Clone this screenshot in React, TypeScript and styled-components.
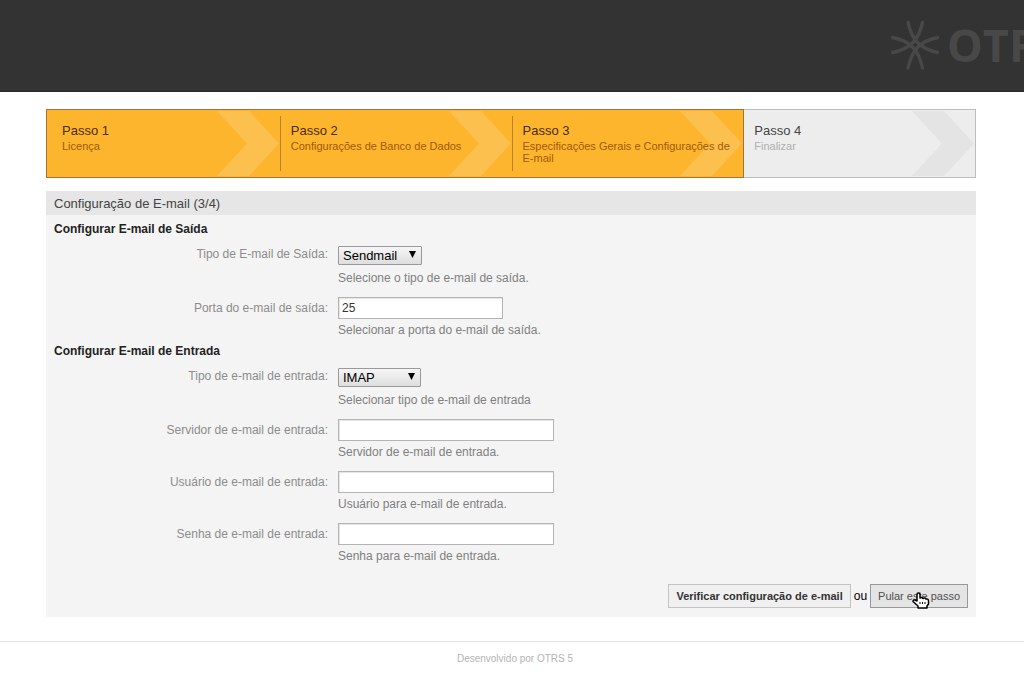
import React from 'react';
import styled, { createGlobalStyle, css } from 'styled-components';

const Global = createGlobalStyle`
  *, *::before, *::after { box-sizing: border-box; }
  body {
    margin: 0;
    background: #fff;
    color: #000;
    font: 12px/16px "Liberation Sans", Arial, sans-serif;
  }
`;

const Header = styled.header`
  display: flex;
  justify-content: flex-end;
  height: 92px;
  background: #333;
  border-bottom: 1px solid #2a2a2a;
  overflow: hidden;
`;

const Logo = styled.div`
  display: flex;
  align-items: center;
  gap: 7px;
  width: 134px;
  height: 90px;
  color: #484848;
  overflow: hidden;
  svg { flex: none; }
`;

const LogoName = styled.span`
  font: bold 45px/48px "Open Sans", "Noto Sans", sans-serif;
`;

const Main = styled.main`
  margin: 17px 48px 0 46px;
`;

const Steps = styled.ol`
  display: grid;
  grid-template-columns: repeat(4, 1fr);
  height: 69px;
  margin: 0 0 13px;
  padding: 0 0 0 1px;
  list-style: none;
  background: #ededed;
  border: 1px solid #bdbdbd;
`;

const StepItem = styled.li<{ $done: boolean; $first: boolean; $last: boolean }>`
  position: relative;
  margin: -1px 0;
  padding: 13px 10px 0 11px;
  border: solid transparent;
  border-width: 1px 0;
  color: #444;
  ${p => p.$done && css`
    background: #fdb52e;
    border-color: #a5703a;
    color: #4a2c00;
  `}
  ${p => p.$first && css`
    margin-left: -2px;
    padding-left: 15px;
    border-left-width: 1px;
  `}
  ${p => p.$last && css`
    margin-right: -1px;
    border-right-width: 1px;
  `}
  ${p => p.$done && !p.$first && css`
    &::before {
      content: '';
      position: absolute;
      left: 0;
      top: 6px;
      bottom: 6px;
      width: 1px;
      background: #b98230;
    }
  `}
`;

const StepArrow = styled.svg<{ $done: boolean }>`
  position: absolute;
  right: 1px;
  top: 1px;
  fill: ${p => (p.$done ? '#fcc04f' : '#e4e4e4')};
`;

const StepName = styled.div`
  position: relative;
  font-size: 13px;
  line-height: 16px;
`;

const StepText = styled.div<{ $done: boolean }>`
  position: relative;
  font-size: 11px;
  line-height: 12px;
  padding-top: 1px;
  color: ${p => (p.$done ? '#a05a0a' : '#b0b0b0')};
`;

const Panel = styled.section`
  background: #f4f4f4;
`;

const PanelTitle = styled.h1`
  margin: 0;
  padding: 5px 8px 3px;
  background: #e6e6e6;
  color: #444;
  font-size: 13px;
  font-weight: normal;
  line-height: 16px;
`;

const Form = styled.form`
  padding: 6px 8px 9px;
`;

const Group = styled.fieldset`
  min-width: 0;
  margin: 0;
  padding: 0 0 5px;
  border: 0;
`;

const GroupTitle = styled.legend`
  padding: 0;
  margin-bottom: 9px;
  color: #222;
  font-weight: bold;
`;

const Row = styled.div`
  display: grid;
  grid-template-columns: 274px 1fr;
  column-gap: 10px;
  & + & { margin-top: 11px; }
`;

const Label = styled.label<{ $text?: boolean }>`
  padding-top: ${p => (p.$text ? 3 : 0)}px;
  text-align: right;
  color: #8c8c8c;
`;

const Hint = styled.div<{ $text?: boolean }>`
  margin-top: ${p => (p.$text ? 3 : 5)}px;
  color: #808080;
`;

const SelectBox = styled.div`
  position: relative;
  display: flex;
  width: fit-content;
`;

const Select = styled.select<{ $width: number }>`
  appearance: none;
  width: ${p => p.$width}px;
  height: 19px;
  margin: 0;
  padding: 0 18px 0 4px;
  border: 1px solid #999;
  border-radius: 1px;
  background: linear-gradient(#f6f6f6, #dedede);
  color: #000;
  font: 13px/16px "Liberation Sans", Arial, sans-serif;
`;

const SelectArrow = styled.svg`
  position: absolute;
  right: 6px;
  top: 5px;
  pointer-events: none;
`;

const TextInput = styled.input<{ $width: number }>`
  display: block;
  width: ${p => p.$width}px;
  height: 22px;
  margin: 0;
  padding: 0 3px;
  border: 1px solid #b4b4b4;
  border-radius: 0;
  background: #fff;
  box-shadow: inset 1px 1px 1px #e4e4e4;
  color: #333;
  font: 12px/16px "Liberation Sans", Arial, sans-serif;
`;

const Actions = styled.div`
  display: flex;
  justify-content: flex-end;
  align-items: center;
  gap: 3px;
  margin-top: 15px;
`;

const Button = styled.button<{ $primary?: boolean }>`
  position: relative;
  height: 24px;
  padding: 0 7px;
  border: 1px solid ${p => (p.$primary ? '#c4c4c4' : '#999')};
  border-radius: 0;
  background: ${p => (p.$primary ? '#f0f0f0' : '#e4e4e4')};
  color: ${p => (p.$primary ? '#333' : '#505050')};
  font: ${p => (p.$primary ? 'bold' : 'normal')} 11px/14px "Liberation Sans", Arial, sans-serif;
`;

const Pointer = styled.svg`
  position: absolute;
  left: 41px;
  top: 7px;
`;

const Footer = styled.footer`
  margin-top: 24px;
  padding: 9px 0 8px 6px;
  border-top: 1px solid #e6e6e6;
  text-align: center;
  color: #b4b4b4;
  font-size: 10px;
`;

const steps = [
  { name: 'Passo 1', text: 'Licença', done: true },
  { name: 'Passo 2', text: 'Configurações de Banco de Dados', done: true },
  { name: 'Passo 3', text: 'Especificações Gerais e Configurações de E-mail', done: true },
  { name: 'Passo 4', text: 'Finalizar', done: false },
];

function SelectField({ id, label, options, width, hint }: {
  id: string; label: string; options: string[]; width: number; hint: string;
}) {
  return (
    <Row>
      <Label htmlFor={id}>{label}</Label>
      <div>
        <SelectBox>
          <Select id={id} $width={width} defaultValue={options[0]}>
            {options.map(o => <option key={o}>{o}</option>)}
          </Select>
          <SelectArrow width="7" height="7" viewBox="0 0 7 7" aria-hidden="true">
            <path d="M0 0H7L3.5 7Z" />
          </SelectArrow>
        </SelectBox>
        <Hint>{hint}</Hint>
      </div>
    </Row>
  );
}

function TextField({ id, label, type = 'text', value, width, hint }: {
  id: string; label: string; type?: string; value?: string; width: number; hint: string;
}) {
  return (
    <Row>
      <Label htmlFor={id} $text>{label}</Label>
      <div>
        <TextInput id={id} type={type} defaultValue={value} $width={width} />
        <Hint $text>{hint}</Hint>
      </div>
    </Row>
  );
}

export default function App() {
  return (
    <>
      <Global />
      <Header>
        <Logo>
          <svg width="50" height="50" viewBox="0 0 50 50" fill="none" stroke="currentColor" strokeWidth="3.4" strokeLinecap="round" aria-hidden="true">
            <path d="M18 2.5C20 11 23 18 27.500 22.500S40 31 47.500 32.500" />
            <path d="M32.500 2.500C30.500 11 27.500 18 23 22.500S10.500 31 2.500 32.500" />
            <path d="M18 48C20 39 23 32 27.500 27.500S40 19 47.500 17.500" />
            <path d="M32.500 48C30.500 39 27.500 32 23 27.500S10.500 19 2.500 17.500" />
          </svg>
          <LogoName>OTRS</LogoName>
        </Logo>
      </Header>
      <Main>
        <Steps>
          {steps.map((s, i) => (
            <StepItem key={s.name} $done={s.done} $first={i === 0} $last={s.done && !steps[i + 1]?.done}>
              <StepArrow $done={s.done} width="62" height="65" viewBox="0 0 62 65" aria-hidden="true">
                <path d="M0 0H32L62 32.5L32 65H0L30 32.5Z" />
              </StepArrow>
              <StepName>{s.name}</StepName>
              <StepText $done={s.done}>{s.text}</StepText>
            </StepItem>
          ))}
        </Steps>
        <Panel>
          <PanelTitle>Configuração de E-mail (3/4)</PanelTitle>
          <Form onSubmit={e => e.preventDefault()}>
            <Group>
              <GroupTitle>Configurar E-mail de Saída</GroupTitle>
              <SelectField id="out-type" label="Tipo de E-mail de Saída:" options={['Sendmail', 'SMTP']} width={84} hint="Selecione o tipo de e-mail de saída." />
              <TextField id="out-port" label="Porta do e-mail de saída:" value="25" width={165} hint="Selecionar a porta do e-mail de saída." />
            </Group>
            <Group>
              <GroupTitle>Configurar E-mail de Entrada</GroupTitle>
              <SelectField id="in-type" label="Tipo de e-mail de entrada:" options={['IMAP', 'POP3']} width={83} hint="Selecionar tipo de e-mail de entrada" />
              <TextField id="in-host" label="Servidor de e-mail de entrada:" width={216} hint="Servidor de e-mail de entrada." />
              <TextField id="in-user" label="Usuário de e-mail de entrada:" width={216} hint="Usuário para e-mail de entrada." />
              <TextField id="in-password" label="Senha de e-mail de entrada:" type="password" width={216} hint="Senha para e-mail de entrada." />
            </Group>
            <Actions>
              <Button type="submit" $primary>Verificar configuração de e-mail</Button>
              <span>ou</span>
              <Button type="button">
                Pular este passo
                <Pointer width="18" height="17" viewBox="0 0 18 17" fill="#fff" stroke="#000" strokeWidth="1.5" strokeLinejoin="round" aria-hidden="true">
                  <path d="M5 9V2.500Q5 1 6.500 1T8 2.500V6Q10 5 11 6.500Q13 5.500 14 7Q16.500 6.500 16.500 9V12L15 14V16H6V14L1 9.500Q1 7.500 3 8Z" />
                  <path d="M8 10v2M10.500 10v2M13 10v2" strokeWidth="1" />
                </Pointer>
              </Button>
            </Actions>
          </Form>
        </Panel>
      </Main>
      <Footer>Desenvolvido por OTRS 5</Footer>
    </>
  );
}
